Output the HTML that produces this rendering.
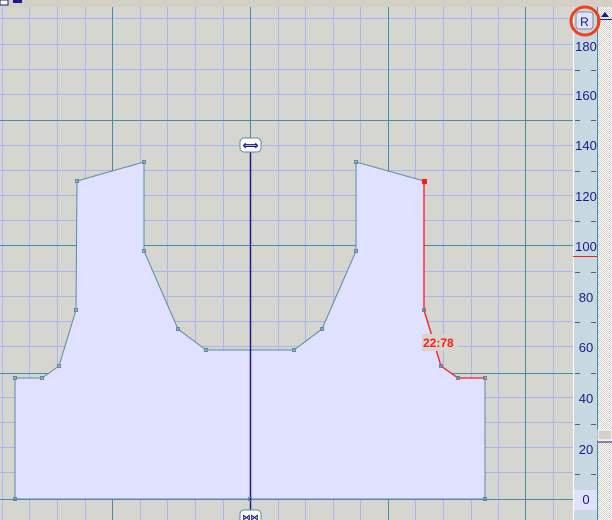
<!DOCTYPE html>
<html><head><style>
html,body{margin:0;padding:0;width:612px;height:520px;overflow:hidden;background:#d6d6d0}
svg{display:block}
</style></head><body>
<svg width="612" height="520" xmlns="http://www.w3.org/2000/svg" font-family="Liberation Sans, sans-serif">
<rect x="0" y="0" width="612" height="520" fill="#d6d6d0"/>
<g stroke="#aab4f4" stroke-width="1">
<line x1="2.5" y1="7" x2="2.5" y2="520"/><line x1="29.5" y1="7" x2="29.5" y2="520"/><line x1="57.5" y1="7" x2="57.5" y2="520"/><line x1="85.5" y1="7" x2="85.5" y2="520"/>
<line x1="140.5" y1="7" x2="140.5" y2="520"/><line x1="167.5" y1="7" x2="167.5" y2="520"/><line x1="195.5" y1="7" x2="195.5" y2="520"/><line x1="223.5" y1="7" x2="223.5" y2="520"/>
<line x1="278.5" y1="7" x2="278.5" y2="520"/><line x1="305.5" y1="7" x2="305.5" y2="520"/><line x1="333.5" y1="7" x2="333.5" y2="520"/><line x1="360.5" y1="7" x2="360.5" y2="520"/>
<line x1="415.5" y1="7" x2="415.5" y2="520"/><line x1="443.5" y1="7" x2="443.5" y2="520"/><line x1="471.5" y1="7" x2="471.5" y2="520"/><line x1="498.5" y1="7" x2="498.5" y2="520"/>
<line x1="553.5" y1="7" x2="553.5" y2="520"/>
<line x1="0" y1="18.5" x2="573" y2="18.5"/><line x1="0" y1="44.5" x2="573" y2="44.5"/><line x1="0" y1="69.5" x2="573" y2="69.5"/><line x1="0" y1="94.5" x2="573" y2="94.5"/>
<line x1="0" y1="145.5" x2="573" y2="145.5"/><line x1="0" y1="170.5" x2="573" y2="170.5"/><line x1="0" y1="195.5" x2="573" y2="195.5"/><line x1="0" y1="220.5" x2="573" y2="220.5"/>
<line x1="0" y1="271.5" x2="573" y2="271.5"/><line x1="0" y1="296.5" x2="573" y2="296.5"/><line x1="0" y1="321.5" x2="573" y2="321.5"/><line x1="0" y1="346.5" x2="573" y2="346.5"/>
<line x1="0" y1="397.5" x2="573" y2="397.5"/><line x1="0" y1="422.5" x2="573" y2="422.5"/><line x1="0" y1="447.5" x2="573" y2="447.5"/><line x1="0" y1="472.5" x2="573" y2="472.5"/>
</g>
<g stroke="#4a8aa8" stroke-width="1">
<line x1="112.5" y1="7" x2="112.5" y2="520"/><line x1="250.5" y1="7" x2="250.5" y2="520"/><line x1="388.5" y1="7" x2="388.5" y2="520"/><line x1="525.5" y1="7" x2="525.5" y2="520"/>
<line x1="0" y1="120.5" x2="573" y2="120.5"/><line x1="0" y1="245.5" x2="573" y2="245.5"/><line x1="0" y1="373.5" x2="573" y2="373.5"/><line x1="0" y1="499.5" x2="573" y2="499.5"/>
</g>
<polygon points="15,499 15,378 42,378 59,366 76,310 77,181 144,162 144,251 178,329 206,350 294,350 322,329 356,251 356,162 424,181 424,310 441,366 458,378 485,378 485,499" fill="#e0e0ff" stroke="#5a8aa8" stroke-width="1"/>
<polyline points="424,181 424,310 441,366 458,378 485,378" fill="none" stroke="#ff1a1a" stroke-width="1.3"/>
<line x1="250.5" y1="150" x2="250.5" y2="512" stroke="#1a1a8a" stroke-width="1.5"/>
<g fill="none" stroke="#5a8aa8">
<rect x="13.5" y="376.5" width="3" height="3"/><rect x="40.5" y="376.5" width="3" height="3"/><rect x="57.5" y="364.5" width="3" height="3"/><rect x="74.5" y="308.5" width="3" height="3"/><rect x="75.5" y="179.5" width="3" height="3"/><rect x="142.5" y="160.5" width="3" height="3"/><rect x="142.5" y="249.5" width="3" height="3"/><rect x="176.5" y="327.5" width="3" height="3"/><rect x="204.5" y="348.5" width="3" height="3"/><rect x="292.5" y="348.5" width="3" height="3"/><rect x="320.5" y="327.5" width="3" height="3"/><rect x="354.5" y="249.5" width="3" height="3"/><rect x="354.5" y="160.5" width="3" height="3"/><rect x="422.5" y="308.5" width="3" height="3"/><rect x="439.5" y="364.5" width="3" height="3"/><rect x="456.5" y="376.5" width="3" height="3"/><rect x="483.5" y="376.5" width="3" height="3"/><rect x="483.5" y="497.5" width="3" height="3"/><rect x="13.5" y="497.5" width="3" height="3"/><rect x="248.5" y="497.5" width="3" height="3"/>
</g>
<rect x="422" y="179" width="5" height="5" fill="#ff1a1a"/>
<rect x="422" y="334" width="36" height="17" fill="#d6d6d0"/>
<text x="423" y="347" font-size="12" font-weight="bold" fill="#ff1a1a">22:78</text>
<rect x="240" y="138" width="21" height="14" rx="4" fill="#fff" stroke="#5a8aa8"/>
<text x="250.5" y="149" font-size="11" text-anchor="middle" fill="#1a1a8a" font-weight="bold">⟺</text>
<rect x="240" y="510" width="21" height="14" rx="4" fill="#fff" stroke="#5a8aa8"/>
<text x="250.5" y="520" font-size="8" text-anchor="middle" fill="#1a1a8a" font-weight="bold">⋈⋈</text>
<rect x="0" y="0" width="612" height="7" fill="#d4d0c8"/>
<rect x="0" y="0" width="8" height="5" fill="#fff" stroke="#1a1a8a"/><rect x="13" y="0" width="9" height="3" fill="#1a1a8a"/>
<rect x="573" y="7" width="1" height="513" fill="#fff"/>
<rect x="574" y="7" width="23" height="513" fill="#c8d8e0"/>
<rect x="597" y="7" width="1" height="513" fill="#4a8aa8"/>
<defs><pattern id="chk" width="2" height="2" patternUnits="userSpaceOnUse"><rect width="2" height="2" fill="#fff"/><rect width="1" height="1" fill="#d4d0c8"/><rect x="1" y="1" width="1" height="1" fill="#d4d0c8"/></pattern></defs>
<rect x="598" y="7" width="14" height="513" fill="url(#chk)"/>
<rect x="598" y="430" width="14" height="10" fill="#d4d0c8" stroke="#fff"/>
<line x1="598" y1="442" x2="612" y2="442" stroke="#1a1a8a"/>
<polygon points="601,17 605,12 609,17" fill="#1a1a8a"/>
<line x1="598" y1="19.5" x2="612" y2="19.5" stroke="#1a1a8a"/>
<rect x="574" y="490" width="23" height="20" fill="#e0e0ff"/>
<line x1="573" y1="256.5" x2="597" y2="256.5" stroke="#ff1a1a"/>
<g stroke="#556070" stroke-width="1">
<line x1="575" y1="70.5" x2="580" y2="70.5"/><line x1="591" y1="70.5" x2="596" y2="70.5"/>
<line x1="575" y1="120.5" x2="580" y2="120.5"/><line x1="591" y1="120.5" x2="596" y2="120.5"/>
<line x1="575" y1="171.5" x2="580" y2="171.5"/><line x1="591" y1="171.5" x2="596" y2="171.5"/>
<line x1="575" y1="221.5" x2="580" y2="221.5"/><line x1="591" y1="221.5" x2="596" y2="221.5"/>
<line x1="575" y1="272.5" x2="580" y2="272.5"/><line x1="591" y1="272.5" x2="596" y2="272.5"/>
<line x1="575" y1="322.5" x2="580" y2="322.5"/><line x1="591" y1="322.5" x2="596" y2="322.5"/>
<line x1="575" y1="373.5" x2="580" y2="373.5"/><line x1="591" y1="373.5" x2="596" y2="373.5"/>
<line x1="575" y1="424.5" x2="580" y2="424.5"/><line x1="591" y1="424.5" x2="596" y2="424.5"/>
<line x1="575" y1="474.5" x2="580" y2="474.5"/><line x1="591" y1="474.5" x2="596" y2="474.5"/>
</g>
<g font-size="13" fill="#1a1a8a" text-anchor="middle">
<text x="586" y="51">180</text><text x="586" y="100">160</text><text x="586" y="150">140</text><text x="586" y="201">120</text><text x="586" y="251">100</text><text x="586" y="302">80</text><text x="586" y="352">60</text><text x="586" y="403">40</text><text x="586" y="454">20</text><text x="586" y="504">0</text>
</g>
<rect x="576" y="12" width="17" height="17" rx="3" fill="#e0e0ff" stroke="#888"/>
<text x="584.5" y="26" font-size="12" fill="#1a1a6a" text-anchor="middle">R</text>
<circle cx="585" cy="21" r="14" fill="none" stroke="#f04020" stroke-width="3"/>
</svg>
</body></html>
